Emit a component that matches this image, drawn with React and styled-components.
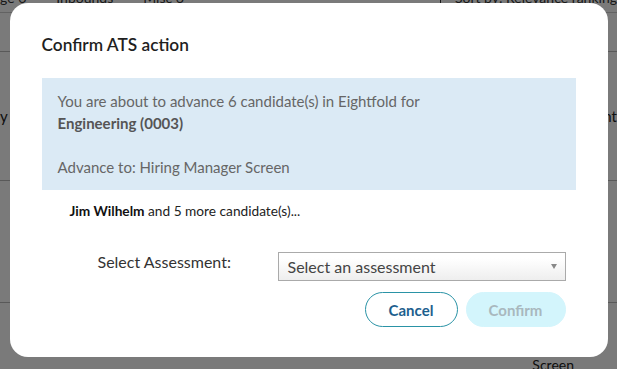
import React from "react";
import styled, { createGlobalStyle } from "styled-components";

const Global = createGlobalStyle`
  html, body { margin: 0; padding: 0; }
  body {
    width: 617px;
    height: 369px;
    overflow: hidden;
    background: #ffffff;
    font-family: "Lato", "Liberation Sans", sans-serif;
  }
`;

const Page = styled.div`
  position: relative;
  width: 617px;
  height: 369px;
  overflow: hidden;
  background: #fff;
  color: #222;
`;

const PageTabs = styled.div`
  display: flex;
  align-items: center;
  gap: 30px;
  height: 30px;
  margin-top: -18px;
  font-size: 14px;
  color: #333;
  border-bottom: 1px solid #ccc;
`;

const TabText = styled.span`
  white-space: nowrap;
`;

const SortArea = styled.span`
  margin-left: auto;
  border-left: 1px solid #333;
  padding-left: 14px;
  white-space: nowrap;
`;

const PageRow = styled.div`
  display: flex;
  justify-content: space-between;
  align-items: center;
  height: ${(p) => p.$h}px;
  border-bottom: 1px solid #bbb;
  font-size: 15px;
  color: #222;
`;

const EdgeText = styled.span`
  white-space: nowrap;
`;

const FooterText = styled.div`
  position: absolute;
  right: 43px;
  bottom: -4px;
  font-size: 14px;
  color: #222;
`;

const Overlay = styled.div`
  position: absolute;
  inset: 0;
  background: rgba(0, 0, 0, 0.52);
  display: flex;
  justify-content: center;
  align-items: flex-start;
  padding-top: 3px;
`;

const Modal = styled.div`
  width: 598px;
  height: 354px;
  box-sizing: border-box;
  background: #fff;
  border-radius: 18px;
  padding: 30px 32px 0 32px;
  display: flex;
  flex-direction: column;
`;

const Title = styled.h2`
  margin: 0;
  font-size: 17.3px;
  font-weight: 600;
  color: #1f1f1f;
  line-height: 24px;
`;

const InfoBox = styled.div`
  margin-top: 21px;
  background: #dbeaf5;
  padding: 12px 16px;
  font-size: 15px;
  line-height: 22px;
  color: #666;
`;

const Strong = styled.strong`
  font-weight: 700;
  color: #555;
`;

const Candidates = styled.div`
  margin-top: 11px;
  padding-left: 28px;
  font-size: 13.7px;
  line-height: 20px;
  color: #222;
`;

const Name = styled.strong`
  font-weight: 700;
  color: #111;
`;

const FormRow = styled.div`
  margin-top: 31px;
  display: flex;
  align-items: flex-start;
`;

const Label = styled.label`
  width: 236px;
  box-sizing: border-box;
  padding-left: 56px;
  padding-top: 0;
  font-size: 16px;
  color: #333;
`;

const SelectBox = styled.div`
  width: 288px;
  height: 29px;
  box-sizing: border-box;
  border: 1px solid #aaa;
  background: linear-gradient(#ffffff 20%, #eeeeee 100%);
  display: flex;
  align-items: center;
  justify-content: space-between;
  padding: 0 8px 0 9px;
  font-size: 16px;
  color: #444;
`;

const Caret = styled.span`
  width: 0;
  height: 0;
  border-left: 3.5px solid transparent;
  border-right: 3.5px solid transparent;
  border-top: 5px solid #888;
`;

const Actions = styled.div`
  margin-top: 11px;
  padding-right: 10px;
  display: flex;
  justify-content: flex-end;
  gap: 8px;
`;

const Button = styled.button`
  height: 35px;
  width: ${(p) => p.$w}px;
  border-radius: 18px;
  font-family: inherit;
  font-size: 15px;
  font-weight: 700;
  cursor: pointer;
  border: 1px solid ${(p) => (p.$primary ? "#d3f5fc" : "#2a93a6")};
  background: ${(p) => (p.$primary ? "#d3f5fc" : "#fff")};
  color: ${(p) => (p.$primary ? "#a9b8be" : "#1d5f8e")};
`;

export default function App() {
  return (
    <>
      <Global />
      <Page>
        <PageTabs>
          <TabText>ge 6</TabText>
          <TabText>Inbounds</TabText>
          <TabText>Misc 6</TabText>
          <SortArea>Sort by: Relevance ranking</SortArea>
        </PageTabs>
        <PageRow $h={38}>
          <EdgeText />
          <EdgeText />
        </PageRow>
        <PageRow $h={128}>
          <EdgeText>y</EdgeText>
          <EdgeText>nt</EdgeText>
        </PageRow>
        <PageRow $h={121}>
          <EdgeText />
          <EdgeText />
        </PageRow>
        <FooterText>Screen</FooterText>
        <Overlay>
          <Modal role="dialog" aria-labelledby="ats-title">
            <Title id="ats-title">Confirm ATS action</Title>
            <InfoBox>
              You are about to advance 6 candidate(s) in Eightfold for
              <br />
              <Strong>Engineering (0003)</Strong>
              <br />
              <br />
              Advance to: Hiring Manager Screen
            </InfoBox>
            <Candidates>
              <Name>Jim Wilhelm</Name> and 5 more candidate(s)...
            </Candidates>
            <FormRow>
              <Label>Select Assessment:</Label>
              <SelectBox>
                <span>Select an assessment</span>
                <Caret />
              </SelectBox>
            </FormRow>
            <Actions>
              <Button $w={93}>Cancel</Button>
              <Button $w={100} $primary disabled>
                Confirm
              </Button>
            </Actions>
          </Modal>
        </Overlay>
      </Page>
    </>
  );
}
